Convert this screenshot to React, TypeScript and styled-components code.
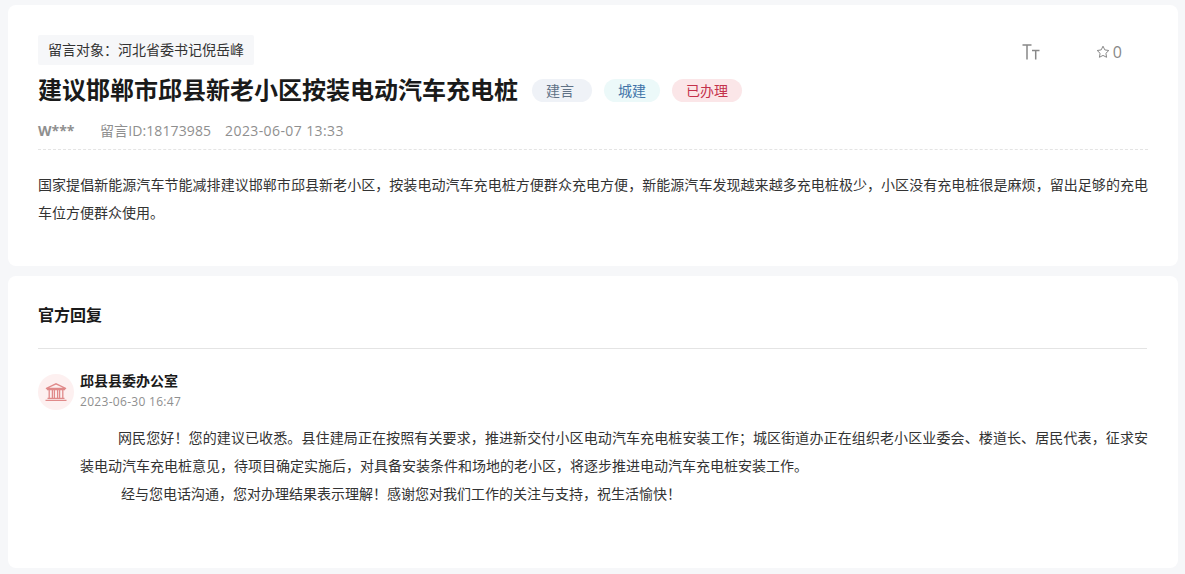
import { FC } from 'react';
import styled, { createGlobalStyle } from 'styled-components';

const GlobalStyle = createGlobalStyle`
  html, body {
    margin: 0;
    padding: 0;
    background: #f6f7f9;
    font-family: "Open Sans", "Noto Sans CJK SC", sans-serif;
  }
`;

const Page = styled('div')`
  width: 1170px;
  padding: 5px 0 6px 8px;
  display: flex;
  flex-direction: column;
  gap: 10px;
`;

const Card = styled('section')<{ $height: number }>`
  height: ${(p) => p.$height}px;
  box-sizing: border-box;
  background: #fff;
  border-radius: 8px;
  padding: 30px 30px 0;
`;

const TopRow = styled('div')`
  display: flex;
  justify-content: space-between;
  align-items: flex-start;
`;

const Target = styled('div')`
  height: 30px;
  padding: 0 10px;
  line-height: 30px;
  font-size: 14px;
  color: #333;
  background: #f6f7f9;
  border-radius: 2px;
`;

const Tools = styled('div')`
  display: flex;
  align-items: center;
  height: 34px;
  padding-right: 26px;
  color: #888;
`;

const FontSize = styled('span')`
  display: flex;
  margin-right: 56px;
`;

const Star = styled('span')`
  display: flex;
  align-items: center;
  gap: 3px;
  font-size: 16px;
`;

const TitleRow = styled('div')`
  display: flex;
  align-items: center;
  margin-top: 3px;
  height: 36px;
`;

const Title = styled('h1')`
  margin: 0 14px 0 0;
  font-size: 24px;
  line-height: 36px;
  font-weight: 700;
  color: #1a1a1a;
`;

const Tag = styled('span')<{ $bg: string; $color: string; $right: number }>`
  height: 23px;
  margin-right: 12px;
  padding: 0 ${(p) => p.$right}px 0 14px;
  line-height: 23px;
  font-size: 14px;
  border-radius: 12px;
  color: ${(p) => p.$color};
  background: ${(p) => p.$bg};
`;

const Meta = styled('div')`
  display: flex;
  align-items: center;
  height: 24px;
  margin-top: 10px;
  padding-bottom: 7px;
  border-bottom: 1px dashed #e4e4e4;
  font-size: 14px;
  color: #8f8f8f;
`;

const Author = styled('b')`
  width: 62px;
  font-size: 14px;
`;

const MetaId = styled('span')`
  margin-right: 14px;
  letter-spacing: 0.1px;
`;

const MetaDate = styled('span')`
  letter-spacing: 0.4px;
`;

const Content = styled('p')`
  margin: 21px 0 0;
  font-size: 14px;
  line-height: 28px;
  text-align: justify;
  color: #333;
`;

const ReplyHeading = styled('h2')`
  margin: 0 1px 0 0;
  height: 42px;
  border-bottom: 1px solid #e4e4e4;
  font-size: 16px;
  line-height: 18px;
  font-weight: 700;
  color: #1a1a1a;
`;

const Office = styled('div')`
  display: flex;
  align-items: center;
  gap: 6px;
  margin-top: 22px;
`;

const Avatar = styled('div')`
  width: 36px;
  height: 36px;
  flex: none;
  display: flex;
  align-items: center;
  justify-content: center;
  border-radius: 50%;
  background: #fdf0f0;
`;

const OfficeName = styled('div')`
  font-size: 14px;
  line-height: 20px;
  font-weight: 700;
  color: #1a1a1a;
`;

const OfficeDate = styled('div')`
  font-size: 12px;
  line-height: 21px;
  letter-spacing: 0.3px;
  color: #8f8f8f;
`;

const ReplyBody = styled('div')`
  margin: 12px 0 0 42px;
`;

const ReplyLine = styled('p')<{ $indent: number }>`
  margin: 0;
  font-size: 14px;
  line-height: 28px;
  text-align: justify;
  color: #333;
  text-indent: ${(p) => p.$indent}px;
`;

const TextSizeIcon: FC = () => (
  <svg width="18" height="16" viewBox="0 0 18 16" fill="none" stroke="#888" strokeWidth="1.5">
    <path d="M0.5 1h9M5 1v14.500M10 6.500h7.500M13.700 6.500v9" />
  </svg>
);

const StarIcon: FC = () => (
  <svg width="14" height="14" viewBox="0 0 14 14" fill="none" stroke="#888" strokeWidth="1">
    <path d="M7 1.200l1.800 3.700 4 .6-2.900 2.800.7 4L7 10.400l-3.600 1.900.7-4L1.200 5.500l4-.6z" strokeLinejoin="round" />
  </svg>
);

const BankIcon: FC = () => (
  <svg width="22" height="18" viewBox="0 0 22 18" fill="none" stroke="#e08a8a" strokeWidth="1.300">
    <path d="M1 5.500L11 .8l10 4.700zM2 6.500h18M4.200 7v8M7.400 7v8M9.400 7v8M12.600 7v8M14.600 7v8M17.800 7v8M2.500 15.300h17M.5 17.300h21" />
  </svg>
);

export default function App() {
  return (
    <Page>
      <GlobalStyle />
      <Card $height={261}>
        <TopRow>
          <Target>留言对象：河北省委书记倪岳峰</Target>
          <Tools>
            <FontSize>
              <TextSizeIcon />
            </FontSize>
            <Star>
              <StarIcon />0
            </Star>
          </Tools>
        </TopRow>
        <TitleRow>
          <Title>建议邯郸市邱县新老小区按装电动汽车充电桩</Title>
          <Tag $bg="#eff2f7" $color="#5f7186" $right={18}>建言</Tag>
          <Tag $bg="#ecf9f9" $color="#3f73a8" $right={14}>城建</Tag>
          <Tag $bg="#fbe6e8" $color="#c4314b" $right={14}>已办理</Tag>
        </TitleRow>
        <Meta>
          <Author>W***</Author>
          <MetaId>留言ID:18173985</MetaId>
          <MetaDate>2023-06-07 13:33</MetaDate>
        </Meta>
        <Content>
          国家提倡新能源汽车节能减排建议邯郸市邱县新老小区，按装电动汽车充电桩方便群众充电方便，新能源汽车发现越来越多充电桩极少，小区没有充电桩很是麻烦，留出足够的充电车位方便群众使用。
        </Content>
      </Card>
      <Card $height={292}>
        <ReplyHeading>官方回复</ReplyHeading>
        <Office>
          <Avatar>
            <BankIcon />
          </Avatar>
          <div>
            <OfficeName>邱县县委办公室</OfficeName>
            <OfficeDate>2023-06-30 16:47</OfficeDate>
          </div>
        </Office>
        <ReplyBody>
          <ReplyLine $indent={38}>
            网民您好！您的建议已收悉。县住建局正在按照有关要求，推进新交付小区电动汽车充电桩安装工作；城区街道办正在组织老小区业委会、楼道长、居民代表，征求安装电动汽车充电桩意见，待项目确定实施后，对具备安装条件和场地的老小区，将逐步推进电动汽车充电桩安装工作。
          </ReplyLine>
          <ReplyLine $indent={41}>
            经与您电话沟通，您对办理结果表示理解！感谢您对我们工作的关注与支持，祝生活愉快！
          </ReplyLine>
        </ReplyBody>
      </Card>
    </Page>
  );
}
